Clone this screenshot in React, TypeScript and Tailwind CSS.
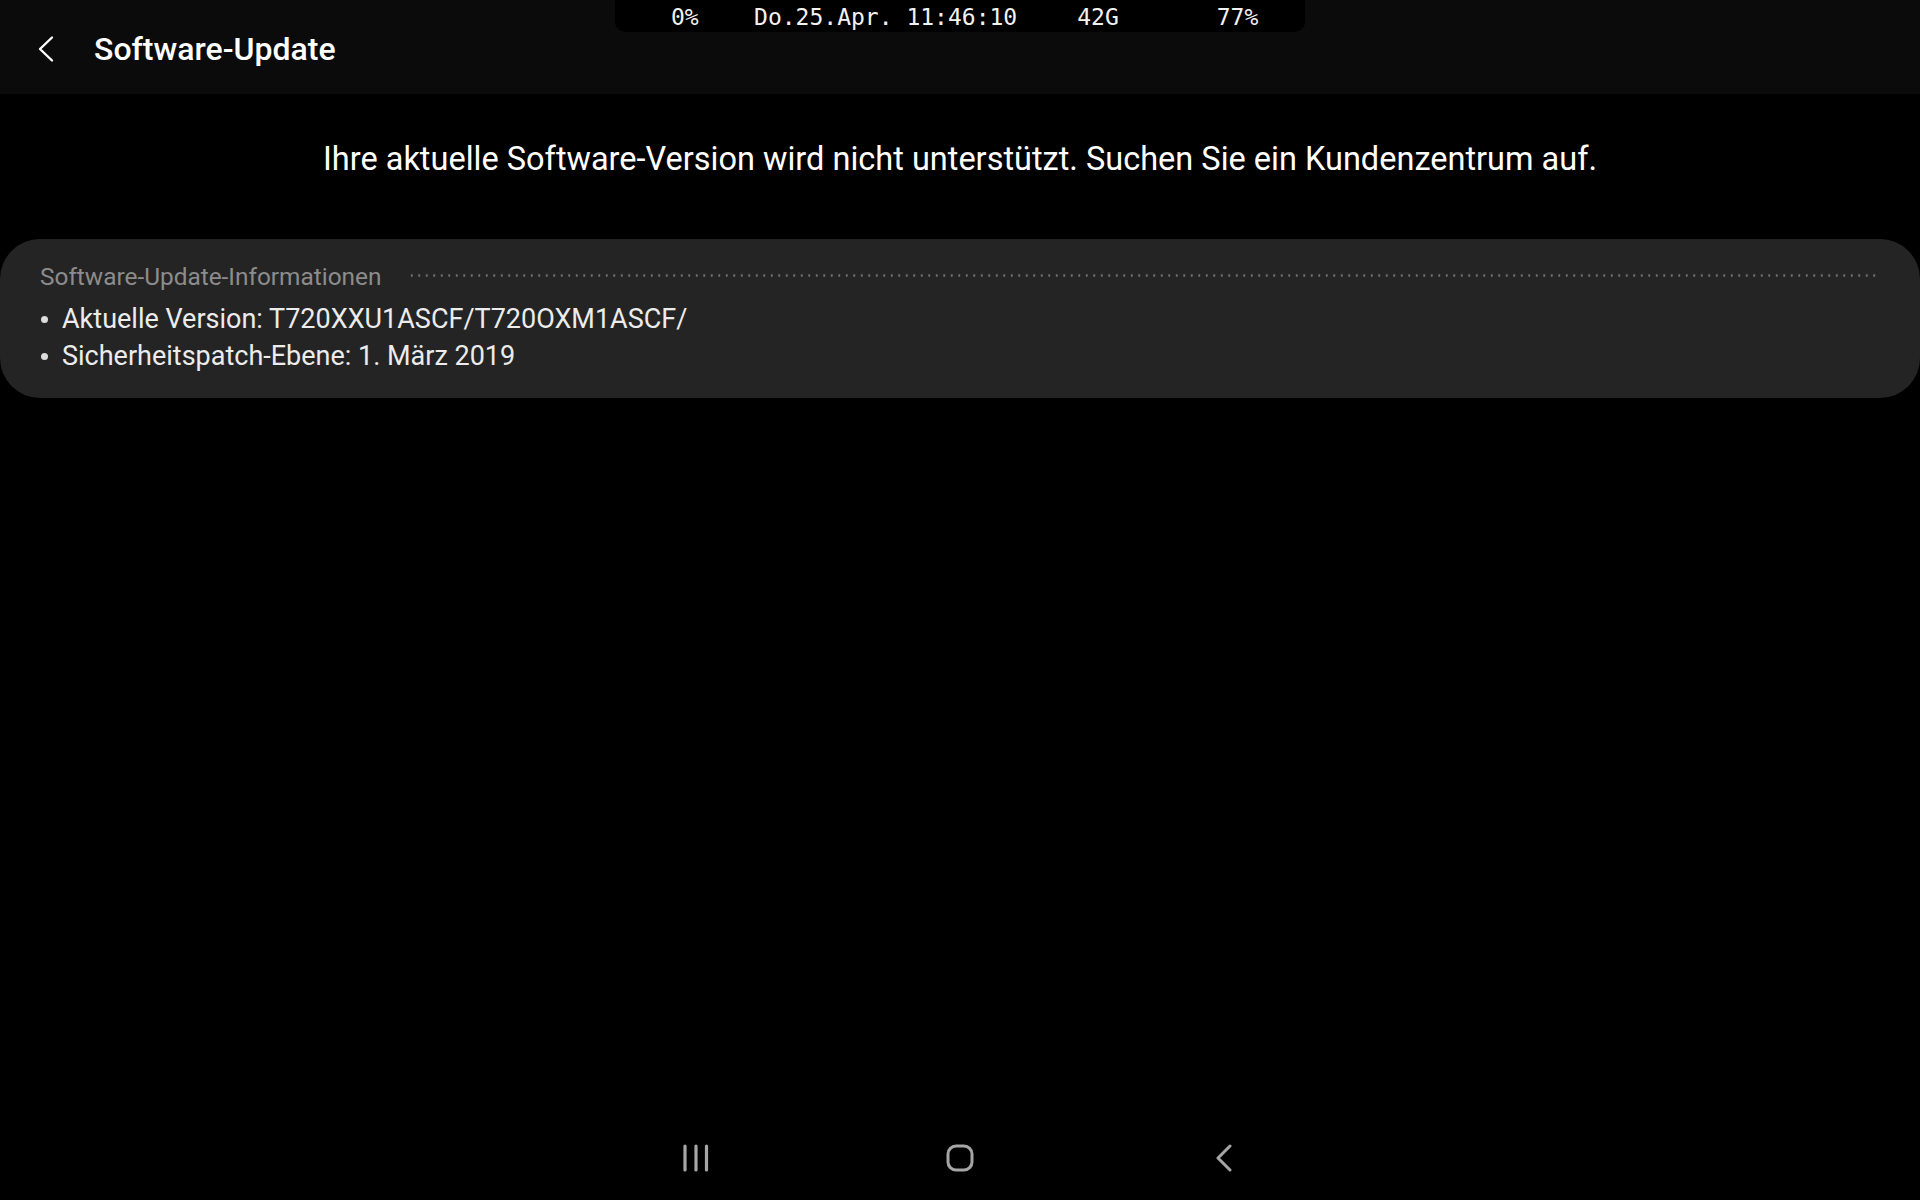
import React from 'react';

const StatusBar = () => (
  <div className="absolute left-[615px] top-0 w-[690px] h-[32px] bg-black rounded-b-[10px] flex items-center">
    <pre className="m-0 pl-[56px] pt-[2px] text-[23px] leading-none text-[#f2f2f2] font-['DejaVu_Sans_Mono',monospace]">
      {'0%    Do.25.Apr. 11:46:10'}
      <span className="ml-[60px]">42G</span>
      <span className="ml-[98px]">77%</span>
    </pre>
  </div>
);

const NavBar = () => (
  <div className="h-[84px] flex justify-center items-center text-[#a6a6a6]">
    <div className="w-[264px] flex justify-center">
      <svg width="28" height="28" viewBox="0 0 28 28" fill="none" stroke="currentColor" strokeWidth="3.2" strokeLinecap="round">
        <line x1="3" y1="2" x2="3" y2="26" />
        <line x1="14" y1="2" x2="14" y2="26" />
        <line x1="24.5" y1="2" x2="24.5" y2="26" />
      </svg>
    </div>
    <div className="w-[264px] flex justify-center">
      <svg width="28" height="28" viewBox="0 0 28 28" fill="none" stroke="currentColor" strokeWidth="3">
        <rect x="2" y="2" width="24" height="24" rx="8" />
      </svg>
    </div>
    <div className="w-[264px] flex justify-center">
      <svg width="18" height="28" viewBox="0 0 18 28" fill="none" stroke="currentColor" strokeWidth="3" strokeLinecap="round" strokeLinejoin="round">
        <path d="M15 2 L3 14 L15 26" />
      </svg>
    </div>
  </div>
);

const InfoItem = ({ text }: { text: string }) => (
  <div className="flex items-center h-[37px]">
    <span className="ml-[1px] w-[7px] h-[7px] rounded-full bg-[#dcdcdc]" />
    <span className="ml-[14px] text-[27px] leading-none text-[#ececec]">{text}</span>
  </div>
);

export default function App() {
  return (
    <div className="w-full h-[1200px] bg-black flex flex-col font-['Roboto',sans-serif] overflow-hidden">
      {/* Header */}
      <div className="relative h-[94px] bg-[#0b0b0b] flex items-center pl-[36px] shrink-0">
        <StatusBar />
        <svg width="20" height="28" viewBox="0 0 20 28" fill="none" stroke="white" strokeWidth="2.4" strokeLinecap="round" strokeLinejoin="round" className="mt-[3px]">
          <path d="M16 2.5 L4 14 L16 25.5" />
        </svg>
        <h1 className="ml-[38px] text-[32px] font-medium text-white leading-none mt-[4px]">Software-Update</h1>
      </div>

      <div className="flex-1">
        <p className="mt-[47px] text-center text-[32.5px] leading-[37px] text-white">
          Ihre aktuelle Software-Version wird nicht unterstützt. Suchen Sie ein Kundenzentrum auf.
        </p>

        {/* Info card */}
        <div className="mt-[61px] h-[159px] bg-[#242424] rounded-[40px] pl-[40px] pr-[43px] pt-[23px]">
          <div className="flex items-center h-[30px]">
            <span className="text-[24.4px] leading-none text-[#8c8c8c] whitespace-nowrap">Software-Update-Informationen</span>
            <div className="ml-[27px] flex-1 h-[3px] -mt-[4px] bg-[radial-gradient(circle,#707070_1px,transparent_1.4px)] bg-[length:7.5px_3px]" />
          </div>
          <div className="mt-[9px]">
            <InfoItem text="Aktuelle Version: T720XXU1ASCF/T720OXM1ASCF/" />
            <InfoItem text="Sicherheitspatch-Ebene: 1. März 2019" />
          </div>
        </div>
      </div>

      <NavBar />
    </div>
  );
}
